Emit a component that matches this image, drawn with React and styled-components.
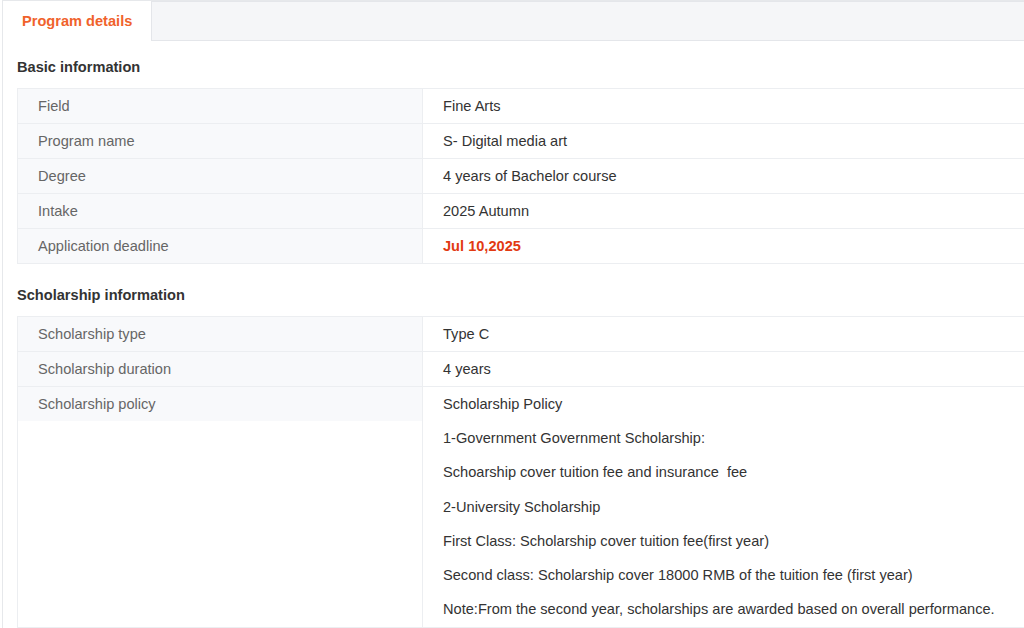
import React from 'react';
import styled, { createGlobalStyle } from 'styled-components';

const GlobalStyle = createGlobalStyle`
  html, body {
    margin: 0;
    padding: 0;
    overflow: hidden;
    background: #ffffff;
    font-family: Arial, "Liberation Sans", sans-serif;
  }
`;

const basicInfo = [
  { label: 'Field', value: 'Fine Arts' },
  { label: 'Program name', value: 'S- Digital media art' },
  { label: 'Degree', value: '4 years of Bachelor course' },
  { label: 'Intake', value: '2025 Autumn' },
  { label: 'Application deadline', value: 'Jul 10,2025', highlight: true },
];

const policyLines = [
  'Scholarship Policy',
  '1-Government Government Scholarship:',
  'Schoarship cover tuition fee and insurance  fee',
  '2-University Scholarship',
  'First Class: Scholarship cover tuition fee(first year)',
  'Second class: Scholarship cover 18000 RMB of the tuition fee (first year)',
  'Note:From the second year, scholarships are awarded based on overall performance.',
];

export default function App() {
  return (
    <>
      <GlobalStyle />
      <Page>
        <TabBar>
          <Tab active>Program details</Tab>
          <TabFill />
        </TabBar>
        <Content>
          <Section>
            <Heading>Basic information</Heading>
            <Table>
              {basicInfo.map((row) => (
                <Row key={row.label}>
                  <LabelCell>
                    <LabelText>{row.label}</LabelText>
                  </LabelCell>
                  <ValueCell>
                    <ValueText highlight={row.highlight}>{row.value}</ValueText>
                  </ValueCell>
                </Row>
              ))}
            </Table>
          </Section>
          <Section>
            <Heading>Scholarship information</Heading>
            <Table>
              <Row>
                <LabelCell>
                  <LabelText>Scholarship type</LabelText>
                </LabelCell>
                <ValueCell>
                  <ValueText>Type C</ValueText>
                </ValueCell>
              </Row>
              <Row>
                <LabelCell>
                  <LabelText>Scholarship duration</LabelText>
                </LabelCell>
                <ValueCell>
                  <ValueText>4 years</ValueText>
                </ValueCell>
              </Row>
              <Row>
                <LabelCell>
                  <LabelText>Scholarship policy</LabelText>
                </LabelCell>
                <ValueCell>
                  <PolicyList>
                    {policyLines.map((line, i) => (
                      <PolicyLine key={i}>{line}</PolicyLine>
                    ))}
                  </PolicyList>
                </ValueCell>
              </Row>
            </Table>
          </Section>
        </Content>
      </Page>
    </>
  );
}

//Style
const Page = styled.div`
  width: 1060px;
  margin-left: 2px;
  border-left: 1px solid #e6e8eb;
  border-top: 1px solid #e6e8eb;
  min-height: 640px;
  font-size: 14.6px;
`;

const TabBar = styled.div`
  display: flex;
  height: 40px;
`;

const Tab = styled.div`
  width: 149px;
  display: flex;
  align-items: center;
  padding-left: 19px;
  box-sizing: border-box;
  font-weight: bold;
  color: ${(p) => (p.active ? '#f0622b' : '#666')};
  background: #ffffff;
  border-right: 1px solid #e4e6ea;
`;

const TabFill = styled.div`
  flex: 1;
  background: #f5f6f8;
  border-top: 1px solid #e4e6ea;
  border-bottom: 1px solid #e4e6ea;
`;

const Content = styled.div`
  padding: 16px 0 0 14px;
`;

const Section = styled.section`
  margin-bottom: 21px;
`;

const Heading = styled.h3`
  margin: 0 0 11px;
  font-size: 14.6px;
  line-height: 20px;
  font-weight: bold;
  color: #333333;
`;

const Table = styled.div`
  border: 1px solid #eceef1;
  border-right: none;
`;

const Row = styled.div`
  display: flex;
  & + & {
    border-top: 1px solid #eceef1;
  }
`;

const LabelCell = styled.div`
  width: 404px;
  flex-shrink: 0;
  border-right: 1px solid #eceef1;
  background: #ffffff;
`;

const LabelText = styled.div`
  height: 34px;
  line-height: 34px;
  padding-left: 20px;
  color: #666666;
  background: #f8f9fb;
`;

const ValueCell = styled.div`
  flex: 1;
  padding-left: 20px;
`;

const ValueText = styled.div`
  height: 34px;
  line-height: 34px;
  color: ${(p) => (p.highlight ? '#e23a12' : '#333333')};
  font-weight: ${(p) => (p.highlight ? 'bold' : 'normal')};
`;

const PolicyList = styled.div`
  padding-bottom: 1px;
`;

const PolicyLine = styled.p`
  margin: 0;
  height: 34.2px;
  line-height: 34px;
  white-space: pre;
  color: #333333;
`;
